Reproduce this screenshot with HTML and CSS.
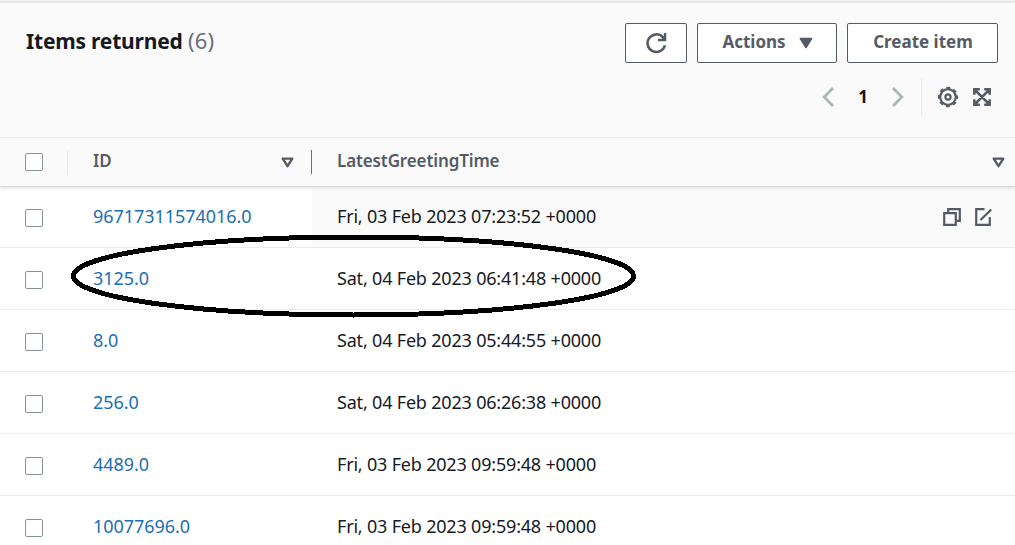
FILE: index.html
```
<!DOCTYPE html>
<html lang="en">
<head>
<meta charset="utf-8">
<title>Items returned</title>
<link rel="stylesheet" href="styles.css">
</head>
<body>
<main class="panel">
  <header class="panel-header">
    <div class="title-row">
      <h2 class="title">Items returned <span class="count">(6)</span></h2>
      <div class="buttons">
        <button class="btn btn-refresh" aria-label="Refresh"><svg width="22" height="22" viewBox="0 0 22 22"><path d="M19.9 13.2A8.8 8.8 0 1 1 17.8 5.2L19.6 7.4M20 1V8H13" fill="none" stroke="currentColor" stroke-width="2.5"/></svg></button>
        <button class="btn btn-actions"><span class="actions-label">Actions</span><svg width="14" height="12" viewBox="0 0 14 12"><path d="M1.4 1.5H12.6L7 10.5Z" fill="currentColor" stroke="currentColor" stroke-width="1.6" stroke-linejoin="round"/></svg></button>
        <button class="btn btn-create"><span class="create-label">Create item</span></button>
      </div>
    </div>
    <div class="tools">
      <svg class="chev" width="12" height="20" viewBox="0 0 12 20"><path d="M11 1L2.2 10L11 19" fill="none" stroke="currentColor" stroke-width="2.8"/></svg>
      <span class="page">1</span>
      <svg class="chev" width="12" height="20" viewBox="0 0 12 20"><path d="M1 1L9.8 10L1 19" fill="none" stroke="currentColor" stroke-width="2.8"/></svg>
      <span class="tools-divider"></span>
      <svg class="gear" width="22" height="22" viewBox="-11 -11 22 22" fill="none" stroke="currentColor"><circle r="7.8" stroke-width="2.2"/><circle r="9.2" stroke-width="1.9" stroke-dasharray="3.9 3.326" stroke-dashoffset="1.95"/><circle r="2.6" stroke-width="2.2"/></svg>
      <svg class="expand" width="20" height="20" viewBox="0 0 20 20" fill="none" stroke="currentColor" stroke-width="2.5"><path d="M2.3 7.8V2.3H7.8M12.2 2.3H17.7V7.8M17.7 12.2V17.7H12.2M7.8 17.7H2.3V12.2M2.5 2.5L17.5 17.5M17.5 2.5L2.5 17.5"/></svg>
    </div>
  </header>
  <section class="table">
    <div class="row head">
      <div class="select"><span class="box"></span></div>
      <div class="id"><span class="head-id">ID</span><svg width="13" height="11" viewBox="0 0 13 11"><path d="M1.7 1.6H11.3L6.5 9.2Z" fill="none" stroke="currentColor" stroke-width="2.4" stroke-linejoin="round"/></svg></div>
      <div class="time"><span class="head-time">LatestGreetingTime</span><svg width="13" height="11" viewBox="0 0 13 11"><path d="M1.7 1.6H11.3L6.5 9.2Z" fill="none" stroke="currentColor" stroke-width="2.4" stroke-linejoin="round"/></svg></div>
    </div>
    <div class="row">
      <div class="select"><span class="box"></span></div>
      <div class="id"><a class="link">96717311574016.0</a></div>
      <div class="time hovered"><span class="date">Fri, 03 Feb 2023 07:23:52 +0000</span>
        <span class="cell-tools"><svg width="18" height="18" viewBox="0 0 18 18" fill="none" stroke="currentColor" stroke-width="2.2"><path d="M1.2 5.2H12.8V16.8H1.2ZM5.2 5V1.2H16.8V12.8H13"/></svg><svg width="18" height="18" viewBox="0 0 18 18" fill="none" stroke="currentColor" stroke-width="2.2"><path d="M9.5 1.2H1.2V16.8H14.8V9M5.5 12L16.2 1.5"/></svg></span>
      </div>
    </div>
    <div class="row">
      <div class="select"><span class="box"></span></div>
      <div class="id"><a class="link">3125.0</a></div>
      <div class="time"><span class="date">Sat, 04 Feb 2023 06:41:48 +0000</span></div>
    </div>
    <div class="row">
      <div class="select"><span class="box"></span></div>
      <div class="id"><a class="link">8.0</a></div>
      <div class="time"><span class="date">Sat, 04 Feb 2023 05:44:55 +0000</span></div>
    </div>
    <div class="row">
      <div class="select"><span class="box"></span></div>
      <div class="id"><a class="link">256.0</a></div>
      <div class="time"><span class="date">Sat, 04 Feb 2023 06:26:38 +0000</span></div>
    </div>
    <div class="row">
      <div class="select"><span class="box"></span></div>
      <div class="id"><a class="link">4489.0</a></div>
      <div class="time"><span class="date">Fri, 03 Feb 2023 09:59:48 +0000</span></div>
    </div>
    <div class="row">
      <div class="select"><span class="box"></span></div>
      <div class="id"><a class="link">10077696.0</a></div>
      <div class="time"><span class="date">Fri, 03 Feb 2023 09:59:48 +0000</span></div>
    </div>
  </section>
  <svg class="annotation" width="568" height="84" viewBox="0 0 568 84" shape-rendering="crispEdges"><ellipse cx="283.5" cy="42" rx="280" ry="39" fill="none" stroke="#000" stroke-width="5"/></svg>
</main>
</body>
</html>
```
FILE: styles.css
```
* { box-sizing: border-box; }
body {
  margin: 0;
  background: #fff;
  color: #16191f;
  font-family: "Noto Sans", "Open Sans", sans-serif;
}
svg { display: block; flex: none; }
.panel {
  position: relative;
  height: 545px;
  overflow: hidden;
}
.panel-header {
  height: 138px;
  padding: 20px 17px 0 26px;
  background: #fafafa;
  border-top: 1px solid #f2f2f2;
  border-bottom: 1px solid #eaeded;
  box-shadow: inset 0 2px 0 #e6e7e7;
}
.title-row {
  display: flex;
  justify-content: space-between;
}
.title {
  margin: 5px 0 0;
  font-size: 21px;
  line-height: 28px;
  font-weight: 700;
  letter-spacing: -0.2px;
  white-space: nowrap;
}
.count {
  color: #687078;
  font-size: 22px;
  font-weight: 400;
  letter-spacing: 0.2px;
}
.buttons { display: flex; gap: 10px; padding-top: 2px; }
.btn {
  display: flex;
  align-items: center;
  justify-content: center;
  height: 40px;
  padding: 0;
  border: 1px solid #545b64;
  border-radius: 2px;
  background: #fff;
  color: #545b64;
  font: 700 17px/24px "Noto Sans", "Open Sans", sans-serif;
  white-space: nowrap;
}
.btn-refresh { width: 62px; }
.btn-actions { width: 140px; gap: 13px; padding-left: 1px; }
.btn-create { width: 151px; padding-left: 1px; }
.actions-label, .create-label { padding-bottom: 2px; }
.tools {
  display: flex;
  align-items: center;
  justify-content: flex-end;
  height: 38px;
  margin-top: 15px;
  padding-right: 6px;
  color: #545b64;
}
.chev { color: #aab7b8; }
.page {
  width: 58px;
  text-align: center;
  color: #16191f;
  font-size: 17px;
  font-weight: 700;
  line-height: 24px;
}
.tools-divider {
  width: 1px;
  height: 38px;
  margin: 0 15px 0 17px;
  background: #eaeded;
}
.expand { margin-left: 13px; }
.row {
  display: grid;
  grid-template-columns: 93px 219px 1fr;
  height: 62px;
  border-bottom: 1px solid #eaeded;
  font-size: 18px;
  line-height: 24px;
}
.select, .id, .time { display: flex; align-items: center; white-space: nowrap; }
.select { padding-left: 25px; }
.box {
  width: 18px;
  height: 18px;
  margin-top: 2px;
  border: 1px solid #879596;
  border-radius: 2px;
  background: #fff;
}
.link, .date, .head-id, .head-time { padding-bottom: 2px; }
.link { color: #1a6fb5; letter-spacing: -0.05px; }
.time { padding-left: 25px; }
.date { letter-spacing: -0.19px; }
.hovered { justify-content: space-between; padding-right: 22px; background: #fafafa; }
.cell-tools { display: flex; gap: 14px; color: #545b64; }
.head {
  position: relative;
  height: 48px;
  border-bottom: 0;
  background: #fafafa;
  box-shadow: 0 1px 1px #d5d9d9, 0 2px 4px rgba(0, 28, 36, 0.12);
  color: #545b64;
  font-size: 17px;
  font-weight: 600;
}
.head .select {
  width: 68px;
  height: 24px;
  margin-top: 12px;
  border-right: 1px solid #eaeded;
}
.head .box { margin-top: 0; }
.head-time { letter-spacing: -0.12px; }
.head .id {
  justify-content: space-between;
  height: 24px;
  margin-top: 12px;
  padding-right: 17px;
  border-right: 1px solid #687078;
}
.head .time { justify-content: space-between; padding-right: 10px; }
.annotation { position: absolute; left: 70px; top: 234px; }
```
